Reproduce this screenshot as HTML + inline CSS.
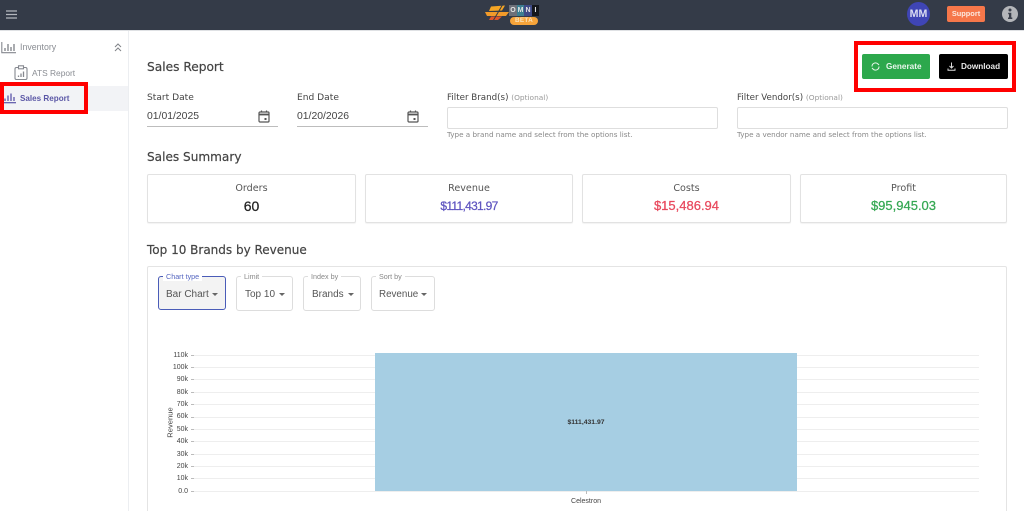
<!DOCTYPE html>
<html><head><meta charset="utf-8">
<style>
html,body{margin:0;padding:0;background:#fff;width:1024px;height:511px;overflow:hidden}
body{position:relative;font-family:"DejaVu Sans","Liberation Sans",sans-serif;color:#444}
.a{position:absolute;white-space:nowrap}
.r{font-family:"Liberation Sans",sans-serif}
.h{-webkit-text-stroke:.2px #444}
.card{position:absolute;top:174px;height:47px;background:#fff;border:1px solid #e2e2e2;border-radius:2px;box-shadow:0 1px 1px rgba(0,0,0,.05);text-align:center}
.card .l{position:absolute;left:0;right:0;top:8px;font-size:9.6px;color:#555;line-height:12px}
.card .v{position:absolute;left:0;right:0;top:23px;font-family:"Liberation Sans",sans-serif;font-size:13px;line-height:16px;-webkit-text-stroke:.25px currentColor}
.inp{position:absolute;top:107px;height:20px;background:#fff;border:1px solid #dedede;border-radius:2px}
.sel{position:absolute;top:276px;height:33px;border:1px solid #ddd;border-radius:3px;box-sizing:content-box;font-family:"Liberation Sans",sans-serif}
.sel .t{position:absolute;top:-5px;left:4px;background:#fff;padding:0 3px;font-size:7.2px;line-height:9px;color:#888}
.sel .v{position:absolute;top:11px;font-size:10px;line-height:13px;color:#555}
.sel .c{position:absolute;top:16px;width:0;height:0;border-left:3.5px solid transparent;border-right:3.5px solid transparent;border-top:3.5px solid #666}
.g{position:absolute;left:194px;width:785px;height:1px;background:#eee}
.k{position:absolute;left:191px;width:3px;height:1px;background:#bbb}
.y{position:absolute;left:160px;width:28px;text-align:right;font:7px/8px "Liberation Sans",sans-serif;color:#444}
</style></head><body>

<!-- header -->
<div class="a" style="left:0;top:0;width:1024px;height:30px;background:#343b48"></div>
<div class="a" style="left:0;top:30px;width:1024px;height:1px;background:#dfe1e4"></div>
<svg class="a" style="left:6px;top:10px" width="12" height="9"><path d="M0 1h11M0 4.5h11M0 8h11" stroke="#b4b8be" stroke-width="1.3"/></svg>

<!-- logo -->
<svg class="a" style="left:484px;top:3px" width="26" height="19" viewBox="0 0 26 19">
<path d="M7 3.5 L21 2.5 L18 7.5 L5 8Z" fill="#f5a524"/>
<path d="M1 9 L25 9 L22 13 L3 13Z" fill="#f29a2a"/>
<path d="M7 13.5 L18 13.5 L14 17 L5 17Z" fill="#e0552b"/>
<path d="M19 1 L9 18" stroke="#343b48" stroke-width="1"/>
</svg>
<div class="a" style="left:509px;top:5px;width:30px;height:11px;display:flex;font:bold 7px/11px 'Liberation Sans',sans-serif;color:#e4e4e4;text-align:center">
<span style="width:8px;background:#6d7079">O</span><span style="width:7px;background:#3d7f92">M</span><span style="width:8px;background:#3f4a86">N</span><span style="width:7px;background:#15171c">I</span></div>
<div class="a" style="left:510px;top:17px;width:28px;height:8px;background:#f7a43a;border-radius:4px;text-align:center;font:bold 6.4px/8px 'Liberation Sans',sans-serif;color:#fbe3bb;letter-spacing:.3px">BETA</div>

<!-- avatar, support, info -->
<div class="a r" style="left:907px;top:2px;width:23px;height:24px;border-radius:50%;background:#3f45b5;color:#dcdef2;text-align:center;font-size:10.6px;font-weight:bold;line-height:25px">MM</div>
<div class="a r" style="left:947px;top:6px;width:38px;height:16px;border-radius:2px;background:#f6774a;color:#fbe9e0;text-align:center;font-size:7.4px;font-weight:bold;line-height:16px">Support</div>
<div class="a" style="left:1002px;top:6px;width:16px;height:16px;border-radius:50%;background:#b4b6ba"></div>
<svg class="a" style="left:1002px;top:6px" width="16" height="16"><circle cx="8" cy="4" r="1.5" fill="#3a3f4b"/><path d="M6.2 6.8H9.3V11.5H10.3V13H6V11.5H7V8.2H6.2Z" fill="#3a3f4b"/></svg>

<!-- sidebar -->
<div class="a" style="left:128px;top:31px;width:1px;height:480px;background:#eceef1"></div>
<div class="a" style="left:0;top:86px;width:128px;height:25px;background:#f2f3f6"></div>
<svg class="a" style="left:1px;top:41px" width="16" height="13" fill="none" stroke="#85888f" stroke-width="1.1"><path d="M.8 1V11.7H15"/><path d="M4 10V7M7 10V3M10 10V6M13 10V3" stroke-width="1.4"/></svg>
<div class="a r" style="left:20px;top:41px;font-size:8.8px;line-height:13px;color:#8a8d93">Inventory</div>
<svg class="a" style="left:114px;top:43px" width="8" height="9" fill="none" stroke="#808388" stroke-width="1"><path d="M1 4 4 1 7 4M1 8 4 5 7 8"/></svg>
<svg class="a" style="left:14px;top:65px" width="14" height="15" fill="none" stroke="#85888f" stroke-width="1.1"><rect x="1" y="2.5" width="12" height="12" rx="1.5"/><rect x="4.5" y=".8" width="5" height="3" fill="#fff"/><path d="M4.5 12V10.5M7 12V8.5M9.5 12V6.5" stroke-width="1.3"/></svg>
<div class="a r" style="left:32px;top:67px;font-size:8.4px;line-height:13px;color:#8a8d93">ATS Report</div>
<svg class="a" style="left:3px;top:91px" width="13" height="13" fill="none" stroke="#5a55a8" stroke-width="1.2"><path d="M0 11.7H13"/><path d="M2 10V7.5M5 10V4.5M8 10V2.5M11 10V6" stroke-width="1.3"/></svg>
<div class="a r" style="left:20px;top:92px;font-size:8.1px;font-weight:bold;line-height:13px;color:#5b57a6">Sales Report</div>
<div class="a" style="left:0;top:82px;width:80px;height:24px;border:4px solid #f00"></div>

<!-- title -->
<div class="a h" style="left:147px;top:60px;font-size:12.2px;line-height:15px">Sales Report</div>

<!-- buttons -->
<div class="a" style="left:854px;top:41px;width:154px;height:43px;border:4px solid #f00"></div>
<div class="a r" style="left:862px;top:54px;width:68px;height:25px;border-radius:2px;background:#2ca84c;color:#e8f6ec;font-size:8.2px;font-weight:bold;line-height:25px"><span style="position:absolute;left:24px">Generate</span></div>
<svg class="a" style="left:871px;top:62px" width="9" height="9" fill="none" stroke="#e8f6ec" stroke-width="1"><path d="M1 4.5A3.5 3.5 0 0 1 7 2L8 3M8 4.5A3.5 3.5 0 0 1 2 7L1 6"/></svg>
<div class="a r" style="left:939px;top:54px;width:69px;height:25px;border-radius:2px;background:#000;color:#e8e8e8;font-size:8.2px;font-weight:bold;line-height:25px"><span style="position:absolute;left:22px">Download</span></div>
<svg class="a" style="left:947px;top:62px" width="9" height="9" fill="none" stroke="#ddd" stroke-width="1"><path d="M4.5 .5V5.5M2.5 4 4.5 6 6.5 4M1 6.5V8.3H8V6.5"/></svg>

<!-- form -->
<div class="a" style="left:147px;top:92px;font-size:9.1px;line-height:12px;color:#444">Start Date</div>
<div class="a r" style="left:147px;top:110px;font-size:10.4px;line-height:13px;color:#444">01/01/2025</div>
<svg class="a" style="left:258px;top:110px" width="12" height="13" fill="none" stroke="#555" stroke-width="1.2"><rect x="1" y="2" width="10" height="10" rx="1"/><path d="M1 4.5H11" stroke-width="1.8"/><path d="M3.5 .5V2M8.5 .5V2"/><rect x="6.5" y="8" width="2" height="2" fill="#555" stroke="none"/></svg>
<div class="a" style="left:147px;top:126px;width:131px;height:1px;background:#bdbdbd"></div>

<div class="a" style="left:297px;top:92px;font-size:9.1px;line-height:12px;color:#444">End Date</div>
<div class="a r" style="left:297px;top:110px;font-size:10.4px;line-height:13px;color:#444">01/20/2026</div>
<svg class="a" style="left:407px;top:110px" width="12" height="13" fill="none" stroke="#555" stroke-width="1.2"><rect x="1" y="2" width="10" height="10" rx="1"/><path d="M1 4.5H11" stroke-width="1.8"/><path d="M3.5 .5V2M8.5 .5V2"/><rect x="6.5" y="8" width="2" height="2" fill="#555" stroke="none"/></svg>
<div class="a" style="left:297px;top:126px;width:131px;height:1px;background:#bdbdbd"></div>

<div class="a" style="left:447px;top:92px;font-size:8.7px;line-height:12px;color:#444">Filter Brand(s) <span style="font-size:7.4px;color:#999">(Optional)</span></div>
<div class="inp" style="left:447px;width:269px"></div>
<div class="a" style="left:447px;top:130px;font-size:7.2px;line-height:10px;color:#888">Type a brand name and select from the options list.</div>

<div class="a" style="left:737px;top:92px;font-size:8.7px;line-height:12px;color:#444">Filter Vendor(s) <span style="font-size:7.4px;color:#999">(Optional)</span></div>
<div class="inp" style="left:737px;width:269px"></div>
<div class="a" style="left:737px;top:130px;font-size:7.2px;line-height:10px;color:#888">Type a vendor name and select from the options list.</div>

<!-- summary -->
<div class="a h" style="left:147px;top:150px;font-size:12.1px;line-height:15px">Sales Summary</div>
<div class="card" style="left:147px;width:207px"><div class="l">Orders</div><div class="v" style="color:#222;font-size:14px">60</div></div>
<div class="card" style="left:365px;width:206px"><div class="l">Revenue</div><div class="v" style="color:#5f55c0;font-size:12px;letter-spacing:-.7px">$111,431.97</div></div>
<div class="card" style="left:582px;width:207px"><div class="l">Costs</div><div class="v" style="color:#e8485c">$15,486.94</div></div>
<div class="card" style="left:800px;width:205px"><div class="l">Profit</div><div class="v" style="color:#35a853">$95,945.03</div></div>

<div class="a h" style="left:147px;top:243px;font-size:12px;line-height:15px">Top 10 Brands by Revenue</div>

<!-- chart panel -->
<div class="a" style="left:147px;top:266px;width:858px;height:250px;border:1px solid #e4e4e4;border-radius:2px"></div>

<div class="sel" style="left:158px;width:66px;background:#f3f3f3;border:1.5px solid #4a5cb8;height:32px"><div class="t" style="color:#5566c0">Chart type</div><div class="v" style="left:7px">Bar Chart</div><div class="c" style="left:53px"></div></div>
<div class="sel" style="left:236px;width:55px"><div class="t">Limit</div><div class="v" style="left:8px">Top 10</div><div class="c" style="left:42px"></div></div>
<div class="sel" style="left:303px;width:56px"><div class="t">Index by</div><div class="v" style="left:8px">Brands</div><div class="c" style="left:44px"></div></div>
<div class="sel" style="left:371px;width:62px"><div class="t">Sort by</div><div class="v" style="left:7px;font-size:9.8px">Revenue</div><div class="c" style="left:49px"></div></div>

<!-- chart -->
<div class="g" style="top:355px"></div><div class="k" style="top:355px"></div><div class="y" style="top:352px">110k</div>
<div class="g" style="top:367px"></div><div class="k" style="top:367px"></div><div class="y" style="top:364px">100k</div>
<div class="g" style="top:379px"></div><div class="k" style="top:379px"></div><div class="y" style="top:376px">90k</div>
<div class="g" style="top:392px"></div><div class="k" style="top:392px"></div><div class="y" style="top:389px">80k</div>
<div class="g" style="top:404px"></div><div class="k" style="top:404px"></div><div class="y" style="top:401px">70k</div>
<div class="g" style="top:417px"></div><div class="k" style="top:417px"></div><div class="y" style="top:413px">60k</div>
<div class="g" style="top:429px"></div><div class="k" style="top:429px"></div><div class="y" style="top:426px">50k</div>
<div class="g" style="top:441px"></div><div class="k" style="top:441px"></div><div class="y" style="top:438px">40k</div>
<div class="g" style="top:454px"></div><div class="k" style="top:454px"></div><div class="y" style="top:451px">30k</div>
<div class="g" style="top:466px"></div><div class="k" style="top:466px"></div><div class="y" style="top:463px">20k</div>
<div class="g" style="top:478px"></div><div class="k" style="top:478px"></div><div class="y" style="top:475px">10k</div>
<div class="g" style="top:491px"></div><div class="k" style="top:491px"></div><div class="y" style="top:488px">0.0</div>
<div class="a r" style="left:150px;top:418px;width:40px;text-align:center;font-size:7.6px;line-height:9px;color:#444;transform:rotate(-90deg)">Revenue</div>
<div class="a" style="left:375px;top:353px;width:422px;height:138px;background:#a6cee3"></div>
<div class="a r" style="left:536px;top:418px;width:100px;text-align:center;font-size:6.8px;line-height:9px;font-weight:bold;color:#333">$111,431.97</div>
<div class="a" style="left:586px;top:491px;width:1px;height:3px;background:#bbb"></div>
<div class="a r" style="left:536px;top:497px;width:100px;text-align:center;font-size:7px;line-height:9px;color:#444">Celestron</div>
</body></html>
